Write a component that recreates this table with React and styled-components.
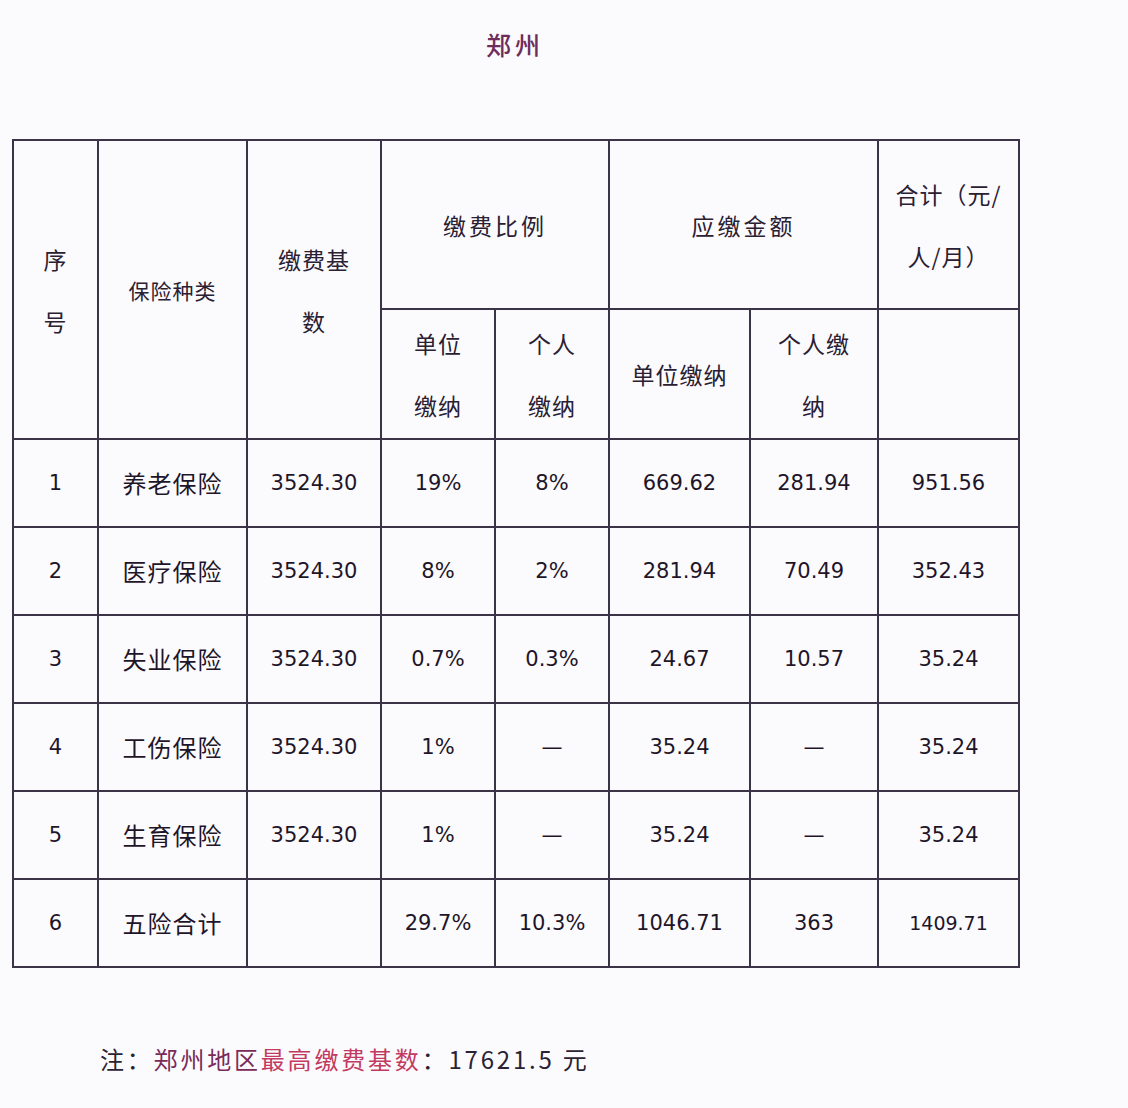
import styled, { createGlobalStyle } from 'styled-components';

const GlobalStyle = createGlobalStyle`
  html, body {
    margin: 0;
    padding: 0;
    background: #fbfbfe;
  }
  body {
    font-family: "Noto Sans CJK SC", "Noto Sans", sans-serif;
    color: #2b2233;
  }
`;

const widths = [85, 149, 134, 114, 114, 141, 128, 141];

const rows = [
  ['1', '养老保险', '3524.30', '19%', '8%', '669.62', '281.94', '951.56'],
  ['2', '医疗保险', '3524.30', '8%', '2%', '281.94', '70.49', '352.43'],
  ['3', '失业保险', '3524.30', '0.7%', '0.3%', '24.67', '10.57', '35.24'],
  ['4', '工伤保险', '3524.30', '1%', '—', '35.24', '—', '35.24'],
  ['5', '生育保险', '3524.30', '1%', '—', '35.24', '—', '35.24'],
  ['6', '五险合计', '', '29.7%', '10.3%', '1046.71', '363', '1409.71'],
];

export default function App() {
  return (
    <Page>
      <GlobalStyle />
      <Title>郑州</Title>
      <Table>
        <colgroup>
          {widths.map((w, i) => <col key={i} style={{ width: w }} />)}
        </colgroup>
        <tbody>
          <tr>
            <HeadCell rowSpan={2} $tall>序<br />号</HeadCell>
            <HeadCell rowSpan={2} $small>保险种类</HeadCell>
            <HeadCell rowSpan={2} $tall>缴费基<br />数</HeadCell>
            <HeadCell colSpan={2} $h={169} $spaced>缴费比例</HeadCell>
            <HeadCell colSpan={2} $h={169} $spaced>应缴金额</HeadCell>
            <HeadCell $h={169} $tall>合计（元/<br />人/月）</HeadCell>
          </tr>
          <tr>
            <HeadCell $h={130} $tall>单位<br />缴纳</HeadCell>
            <HeadCell $h={130} $tall>个人<br />缴纳</HeadCell>
            <HeadCell $h={130}>单位缴纳</HeadCell>
            <HeadCell $h={130} $tall>个人缴<br />纳</HeadCell>
            <HeadCell $h={130} />
          </tr>
          {rows.map((r) => (
            <tr key={r[0]}>
              {r.map((v, i) => (
                <DataCell key={i} $cjk={i === 1} $small={i === 7 && r[0] === '6'}>{v}</DataCell>
              ))}
            </tr>
          ))}
        </tbody>
      </Table>
      <Note>
        <span>注：</span>
        <Place>郑州地区</Place>
        <Highlight>最高缴费基数</Highlight>
        <span>：17621.5 元</span>
      </Note>
    </Page>
  );
}

const Page = styled.div`
  display: flex;
  flex-direction: column;
  padding: 24px 0 0 12px;
  width: 1006px;
`;

const Title = styled.div`
  text-align: center;
  font-size: 25px;
  font-weight: 500;
  letter-spacing: 4px;
  color: #6e2d5c;
  height: 40px;
  line-height: 40px;
  margin-bottom: 75px;
`;

const Table = styled.table`
  border-collapse: collapse;
  table-layout: fixed;
  width: 1006px;
  td {
    border: 2px solid #3b3347;
    padding: 0;
    text-align: center;
    vertical-align: middle;
  }
`;

const HeadCell = styled.td`
  height: ${(p) => (p.$h ? `${p.$h - 2}px` : 'auto')};
  font-size: ${(p) => (p.$small ? '21px' : '23px')};
  line-height: ${(p) => (p.$tall ? '62px' : '30px')};
  letter-spacing: ${(p) => (p.$spaced ? '3px' : '1px')};
  color: #2a2032;
`;

const DataCell = styled.td`
  height: 86px;
  line-height: 1;
  font-family: ${(p) => (p.$cjk ? '"Noto Sans CJK SC", sans-serif' : '"DejaVu Sans", sans-serif')};
  font-size: ${(p) => (p.$cjk ? '24px' : p.$small ? '19px' : '21px')};
  letter-spacing: ${(p) => (p.$cjk ? '1px' : '0')};
  color: #1f1529;
`;

const Note = styled.div`
  margin: 74px 0 0 88px;
  font-size: 24px;
  line-height: 34px;
  letter-spacing: 2.8px;
  color: #2b2233;
  white-space: nowrap;
`;

const Place = styled.span`
  color: #7a2b5a;
`;

const Highlight = styled.span`
  color: #c23a62;
`;
